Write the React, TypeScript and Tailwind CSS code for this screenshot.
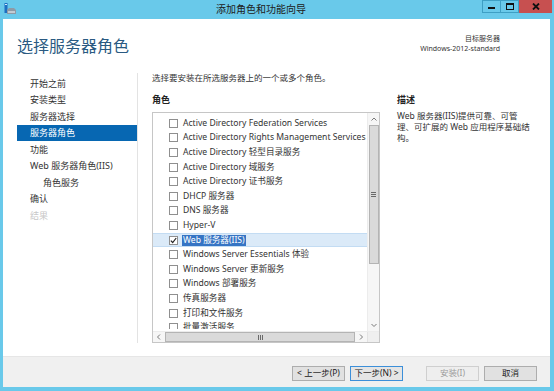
import React from 'react'

const navItems = [
  { label: '开始之前' },
  { label: '安装类型' },
  { label: '服务器选择' },
  { label: '服务器角色', active: true },
  { label: '功能' },
  { label: 'Web 服务器角色(IIS)' },
  { label: '角色服务', indent: true },
  { label: '确认' },
  { label: '结果', disabled: true },
]

const roles = [
  'Active Directory Federation Services',
  'Active Directory Rights Management Services',
  'Active Directory 轻型目录服务',
  'Active Directory 域服务',
  'Active Directory 证书服务',
  'DHCP 服务器',
  'DNS 服务器',
  'Hyper-V',
  'Web 服务器(IIS)',
  'Windows Server Essentials 体验',
  'Windows Server 更新服务',
  'Windows 部署服务',
  '传真服务器',
  '打印和文件服务',
  '批量激活服务',
]

function Chevron({ dir }: { dir: 'up' | 'down' | 'left' | 'right' }) {
  const d = {
    up: 'M1.5 5.5 L4 3 L6.5 5.5',
    down: 'M1.5 3 L4 5.5 L6.5 3',
    left: 'M5 1.5 L2.5 4 L5 6.5',
    right: 'M3 1.5 L5.5 4 L3 6.5',
  }[dir]
  return (
    <svg width="8" height="8" viewBox="0 0 8 8">
      <path d={d} fill="none" stroke="#7a7a7a" strokeWidth="1" />
    </svg>
  )
}

function Button({ label, primary, disabled }: { label: string; primary?: boolean; disabled?: boolean }) {
  return (
    <button
      className={`w-[53px] h-[15px] flex items-center justify-center text-[8.5px] leading-none border ${
        primary ? 'border-[#3c8fd9] bg-[#e5e5e5]' : disabled ? 'border-[#cfcfcf] bg-[#eeeeee]' : 'border-[#adadad] bg-[#e1e1e1]'
      } ${disabled ? 'text-[#9a9a9a]' : 'text-[#1a1a1a]'}`}
    >
      {label}
    </button>
  )
}

export default function App() {
  return (
    <div className="w-[554px] h-[391px] bg-[#69c9ea] flex flex-col pb-[4px] font-['Noto_Sans','Noto_Sans_CJK_SC',sans-serif] text-[#1e1e1e] overflow-hidden">
      {/* title bar */}
      <div className="h-[19px] flex items-start">
        <div className="w-[18px] pl-[4px] pt-[3px]">
          <svg width="12" height="12" viewBox="0 0 12 12">
            <rect x="0.5" y="0" width="3" height="10" fill="#1f6fc0" />
            <rect x="1" y="1" width="2" height="1" fill="#cfe6fa" />
            <path d="M3 7 L5 5 H10 L12 7 V11 H3 Z" fill="#8d9aa6" />
            <rect x="4" y="8" width="7" height="2" fill="#c2cbd3" />
          </svg>
        </div>
        <div className="flex-1 text-center pl-[22px] pt-[3px] text-[10px] leading-[12px] text-[#202020]">添加角色和功能向导</div>
        <div className="flex h-[13px]">
          <div className="w-[18px] h-[13px] border border-[#3e9fc4] border-r-0 flex items-end justify-center pb-[3px]">
            <div className="w-[7px] h-[2px] bg-[#111]" />
          </div>
          <div className="w-[19px] h-[13px] border border-[#3e9fc4] flex items-center justify-center">
            <div className="w-[8px] h-[7px] border-[1.5px] border-t-[2.5px] border-[#111]" />
          </div>
          <div className="w-[33px] h-[13px] bg-[#c75050] flex items-center justify-center">
            <svg width="8" height="7" viewBox="0 0 8 7">
              <path d="M1 0.5 L7 6.5 M7 0.5 L1 6.5" stroke="#111" strokeWidth="1.8" />
            </svg>
          </div>
        </div>
        <div className="w-[2px]" />
      </div>

      {/* window body */}
      <div className="flex-1 ml-[3px] mr-[4px] bg-white flex flex-col">
        <div className="h-[51px] flex justify-between">
          <div className="pl-[14px] pt-[16px] text-[16px] leading-[22px] text-[#2a5a82]">选择服务器角色</div>
          <div className="pr-[50px] pt-[15px] text-right text-[7px] leading-[10px] text-[#333]">
            <div>目标服务器</div>
            <div className="text-[7px]">Windows-2012-standard</div>
          </div>
        </div>

        <div className="flex-1 flex">
          {/* nav */}
          <div className="w-[135px] mt-[3px] h-[270px] border-r border-[#e3e3e3] pl-[14px] pt-[2px] text-[9px]">
            {navItems.map((item) => (
              <div
                key={item.label}
                className={`h-[16.5px] flex items-center ${item.indent ? 'pl-[26px]' : 'pl-[13px]'} ${
                  item.active ? 'bg-[#0767b2] text-white' : item.disabled ? 'text-[#c8c8c8]' : 'text-[#333]'
                }`}
              >
                {item.label}
              </div>
            ))}
          </div>

          {/* content */}
          <div className="flex-1 pl-[14px] pt-[2px]">
            <div className="text-[8.5px] leading-[12px] text-[#333]">选择要安装在所选服务器上的一个或多个角色。</div>
            <div className="flex gap-[17px] mt-[10px]">
              <div>
                <div className="text-[9px] leading-[12px] font-bold text-[#222]">角色</div>
                <div className="mt-[6px] w-[228px] h-[231px] border border-[#c6c6c6] flex flex-col">
                  <div className="flex-1 flex min-h-0">
                    <div className="flex-1 pt-[3px] pb-[2px] flex flex-col">
                      <div className="flex-1 overflow-hidden">
                        {roles.map((r) => {
                          const sel = r === 'Web 服务器(IIS)'
                          return (
                            <div
                              key={r}
                              className={`h-[14.6px] flex items-center text-[8.6px] whitespace-nowrap ${
                                sel ? 'bg-[#dbeaf8] border-y border-[#c3dcf3]' : ''
                              }`}
                            >
                              <div className="ml-[16px] w-[9px] h-[9px] border border-[#8f8f8f] bg-white flex items-center justify-center shrink-0">
                                {sel && (
                                  <svg width="7" height="7" viewBox="0 0 7 7">
                                    <path d="M0.8 3.6 L2.7 5.5 L6.2 1" fill="none" stroke="#222" strokeWidth="1.2" />
                                  </svg>
                                )}
                              </div>
                              <span className={`ml-[4px] ${sel ? 'bg-[#3574c4] text-white px-[1px] leading-[11px]' : 'text-[#333] pl-[1px]'}`}>{r}</span>
                            </div>
                          )
                        })}
                      </div>
                    </div>
                    <div className="w-[12px] bg-[#f6f6f6] border-l border-[#ececec] flex flex-col items-center">
                      <div className="h-[12px] flex items-center justify-center">
                        <Chevron dir="up" />
                      </div>
                      <div className="w-[10px] h-[139px] bg-[#dadada] border border-[#b4b4b4] flex items-center justify-center">
                        <div className="w-[5px] flex flex-col gap-[1px]">
                          <div className="h-px bg-[#6a6a6a]" />
                          <div className="h-px bg-[#6a6a6a]" />
                          <div className="h-px bg-[#6a6a6a]" />
                        </div>
                      </div>
                      <div className="flex-1" />
                      <div className="h-[12px] flex items-center justify-center">
                        <Chevron dir="down" />
                      </div>
                    </div>
                  </div>
                  <div className="h-[11px] flex bg-[#f6f6f6] border-t border-[#ececec]">
                    <div className="w-[12px] flex items-center justify-center">
                      <Chevron dir="left" />
                    </div>
                    <div className="flex-1 bg-[#dadada] border border-[#b4b4b4] flex items-center justify-center">
                      <div className="h-[5px] flex gap-[1px]">
                        <div className="w-px bg-[#6a6a6a]" />
                        <div className="w-px bg-[#6a6a6a]" />
                        <div className="w-px bg-[#6a6a6a]" />
                      </div>
                    </div>
                    <div className="w-[12px] flex items-center justify-center">
                      <Chevron dir="right" />
                    </div>
                    <div className="w-[12px] bg-[#efefef] border-l border-[#e2e2e2]" />
                  </div>
                </div>
              </div>

              <div className="w-[136px]">
                <div className="text-[9px] leading-[12px] font-bold text-[#222]">描述</div>
                <div className="mt-[4px] text-[8.5px] leading-[11px] text-[#333]">
                  Web 服务器(IIS)提供可靠、可管理、可扩展的 Web 应用程序基础结构。
                </div>
              </div>
            </div>
          </div>
        </div>

        {/* footer */}
        <div className="h-[31px] bg-[#f0f0f0] border-t border-[#e6e6e6] flex justify-end items-start pt-[9px] pr-[13px]">
          <div className="flex gap-[5px]">
            <Button label="< 上一步(P)" />
            <Button label="下一步(N) >" primary />
          </div>
          <div className="flex gap-[5px] ml-[23px]">
            <Button label="安装(I)" disabled />
            <Button label="取消" />
          </div>
        </div>
      </div>
    </div>
  )
}
